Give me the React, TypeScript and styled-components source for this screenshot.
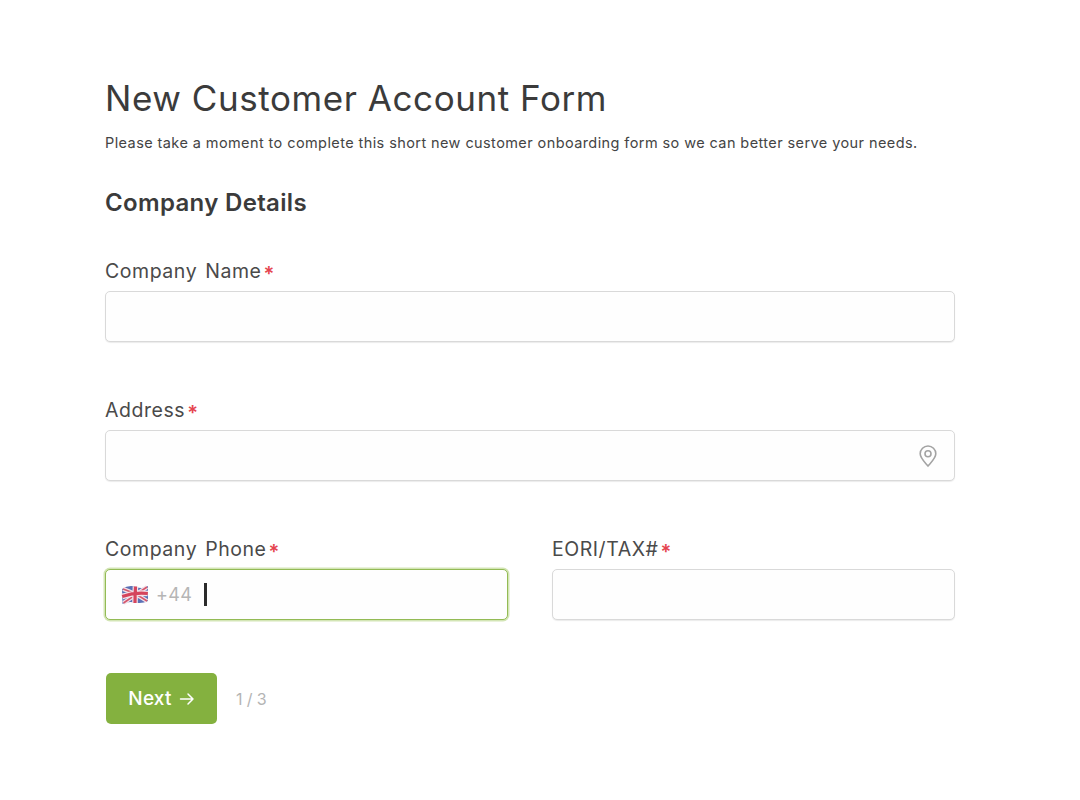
import React from "react";
import styled, { createGlobalStyle } from "styled-components";

const Global = createGlobalStyle`
  html, body { margin: 0; padding: 0; background: #fff; }
  body { font-family: Inter, "Open Sans", "Liberation Sans", sans-serif; color: #3d3d3d; }
  * { box-sizing: border-box; }
`;

const Page = styled.main`
  width: 1080px;
  height: 800px;
  padding: 78px 125px 0 105px;
`;
const Title = styled.h1`
  margin: 0;
  font-size: 35px;
  line-height: 40px;
  font-weight: 400;
  letter-spacing: 0.56px;
  color: #3b3b3b;
  white-space: nowrap;
`;
const Intro = styled.p`
  margin: 15px 0 0;
  font-size: 14.5px;
  line-height: 20px;
  letter-spacing: 0.41px;
  color: #444;
  white-space: nowrap;
`;
const Section = styled.h2`
  margin: 36px 0 0;
  font-size: 24px;
  line-height: 28px;
  font-weight: 600;
  letter-spacing: 0.33px;
  color: #3b3b3b;
`;
const Fields = styled.div`
  margin-top: 42px;
  display: grid;
  grid-template-columns: 1fr 1fr;
  column-gap: 44px;
  row-gap: 56px;
`;
const Field = styled.div<{ $wide?: boolean }>`
  grid-column: ${(p) => (p.$wide ? "1 / -1" : "auto")};
  display: flex;
  flex-direction: column;
  gap: 8px;
`;
const Label = styled.label`
  font-size: 19.5px;
  line-height: 24px;
  color: #4a4a4a;
  letter-spacing: 0.55px;
  word-spacing: 2px;
  white-space: nowrap;
`;
const Star = styled.span`
  color: #e5444f;
  margin-left: 2px;
  font-size: 20px;
  font-weight: 600;
  line-height: 0;
  vertical-align: -3px;
`;
const Box = styled.div<{ $focus?: boolean }>`
  height: 51px;
  border: 1px solid ${(p) => (p.$focus ? "#93bb55" : "#d9d9d9")};
  border-radius: 5px;
  background: #fefefe;
  display: flex;
  align-items: center;
  padding: 0 16px;
  box-shadow: ${(p) =>
    p.$focus ? "0 0 0 1.5px #d3e5b5" : "0 1px 1px rgba(0,0,0,0.08)"};
`;
const Spacer = styled.div`
  flex: 1;
`;
const Prefix = styled.span`
  margin-left: 7px;
  font-size: 18px;
  color: #b5b5b5;
  letter-spacing: 0.3px;
`;
const Caret = styled.span`
  margin-left: 12px;
  width: 2.5px;
  height: 23px;
  background: #2b2b2b;
`;
const Actions = styled.div`
  margin-top: 53px;
  display: flex;
  align-items: center;
  gap: 19px;
  padding-left: 1px;
`;
const NextButton = styled.button`
  width: 111px;
  height: 51px;
  border: 0;
  border-radius: 5px;
  background: #84b13f;
  color: #fff;
  font: 500 19px Inter, sans-serif;
  letter-spacing: 0.2px;
  display: flex;
  align-items: center;
  justify-content: center;
  gap: 7px;
`;
const Steps = styled.span`
  font-size: 16px;
  color: #b4b4b4;
  letter-spacing: 0.4px;
  word-spacing: -1px;
`;
const Flag = styled.svg`
  width: 28px;
  height: 22px;
  flex: none;
  margin-left: -1px;
`;

const UkFlag = () => (
  <Flag viewBox="0 0 28 22" aria-label="UK flag">
    <path d="M1 5 Q8 0.5 15 3 T27 2 V17 Q21 20 14 18.5 T1.5 20 Z" fill="#5a70b5" />
    <path d="M2 5 Q14 9 26 17 M26 3 Q14 11 2.5 19" fill="none" stroke="#f3e2e8" strokeWidth="4" />
    <path d="M2 5 Q14 9 26 17 M26 3 Q14 11 2.5 19" fill="none" stroke="#d5566c" strokeWidth="1.6" />
    <path d="M14.5 2.5 Q14 10 14 19 M1.2 12.5 Q14 8 26.8 9.5" fill="none" stroke="#f3e2e8" strokeWidth="5.6" />
    <path d="M14.5 2.5 Q14 10 14 19 M1.2 12.5 Q14 8 26.8 9.5" fill="none" stroke="#d5445c" strokeWidth="3.2" />
  </Flag>
);

const PinIcon = () => (
  <svg width="20" height="24" viewBox="0 0 20 24" fill="none" stroke="#a3a3a3" strokeWidth="1.6">
    <path d="M10 22 C6 17.5 2.2 14 2.2 9.8 A7.8 7.8 0 0 1 17.8 9.8 C17.8 14 14 17.5 10 22 Z" />
    <circle cx="10" cy="9.8" r="3" />
  </svg>
);

const ArrowIcon = () => (
  <svg width="16" height="14" viewBox="0 0 16 14" fill="none" stroke="#fff" strokeWidth="1.5" strokeLinecap="round" strokeLinejoin="round">
    <path d="M1.5 7 H14 M9 2 L14 7 L9 12" />
  </svg>
);

export default function App() {
  return (
    <>
      <Global />
      <Page>
        <Title>New Customer Account Form</Title>
        <Intro>
          Please take a moment to complete this short new customer onboarding form so we can better serve your needs.
        </Intro>
        <Section>Company Details</Section>
        <Fields>
          <Field $wide>
            <Label>Company Name<Star>*</Star></Label>
            <Box />
          </Field>
          <Field $wide>
            <Label>Address<Star>*</Star></Label>
            <Box>
              <Spacer />
              <PinIcon />
            </Box>
          </Field>
          <Field>
            <Label>Company Phone<Star>*</Star></Label>
            <Box $focus>
              <UkFlag />
              <Prefix>+44</Prefix>
              <Caret />
            </Box>
          </Field>
          <Field>
            <Label>EORI/TAX#<Star>*</Star></Label>
            <Box />
          </Field>
        </Fields>
        <Actions>
          <NextButton>Next <ArrowIcon /></NextButton>
          <Steps>1 / 3</Steps>
        </Actions>
      </Page>
    </>
  );
}
